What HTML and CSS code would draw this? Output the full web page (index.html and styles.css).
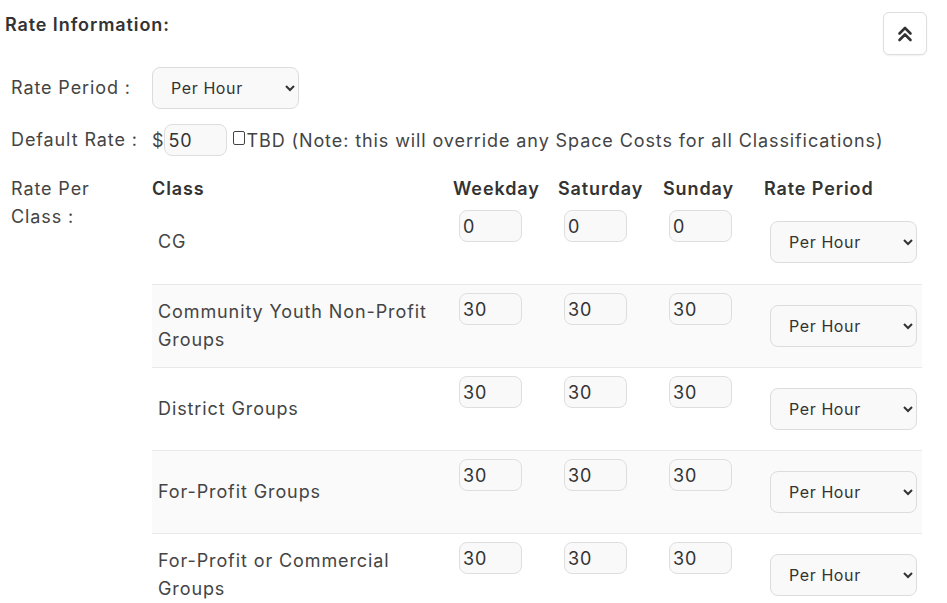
FILE: index.html
```html
<!DOCTYPE html>
<html>
<head>
<meta charset="utf-8">
<link rel="stylesheet" href="styles.css">
</head>
<body>
<div class="page">
  <div class="head">
    <h2 class="title">Rate Information:</h2>
    <button class="collapse" type="button" aria-label="Collapse">
      <svg width="16" height="18" viewBox="0 0 16 18"><path d="M2.5 8.5 L8 3 L13.5 8.5 M2.5 15 L8 9.5 L13.5 15" fill="none" stroke="#333" stroke-width="2.6" stroke-linecap="round" stroke-linejoin="round"/></svg>
    </button>
  </div>

  <div class="field period">
    <span class="lbl">Rate Period :</span>
    <select class="sel"><option>Per Hour</option><option>Per Day</option></select>
  </div>

  <div class="field default">
    <span class="lbl">Default Rate :</span>
    <span class="dollar">$</span><input class="num wide" type="text" value="50"><span class="box"></span><span class="note">TBD (Note: this will override any Space Costs for all Classifications)</span>
  </div>

  <div class="field classes">
    <span class="lbl multi">Rate Per<br>Class :</span>
    <table class="rates">
      <thead>
        <tr><th class="c-class">Class</th><th class="c-day">Weekday</th><th class="c-day">Saturday</th><th class="c-sun">Sunday</th><th class="c-per">Rate Period</th></tr>
      </thead>
      <tbody>
        <tr class="first">
          <td class="name">CG</td>
          <td class="val"><input class="num" type="text" value="0"></td>
          <td class="val"><input class="num" type="text" value="0"></td>
          <td class="val"><input class="num" type="text" value="0"></td>
          <td class="per"><select class="sel sm"><option>Per Hour</option></select></td>
        </tr>
        <tr class="alt">
          <td class="name">Community Youth Non-Profit Groups</td>
          <td class="val"><input class="num" type="text" value="30"></td>
          <td class="val"><input class="num" type="text" value="30"></td>
          <td class="val"><input class="num" type="text" value="30"></td>
          <td class="per"><select class="sel sm"><option>Per Hour</option></select></td>
        </tr>
        <tr>
          <td class="name">District Groups</td>
          <td class="val"><input class="num" type="text" value="30"></td>
          <td class="val"><input class="num" type="text" value="30"></td>
          <td class="val"><input class="num" type="text" value="30"></td>
          <td class="per"><select class="sel sm"><option>Per Hour</option></select></td>
        </tr>
        <tr class="alt">
          <td class="name">For-Profit Groups</td>
          <td class="val"><input class="num" type="text" value="30"></td>
          <td class="val"><input class="num" type="text" value="30"></td>
          <td class="val"><input class="num" type="text" value="30"></td>
          <td class="per"><select class="sel sm"><option>Per Hour</option></select></td>
        </tr>
        <tr>
          <td class="name">For-Profit or Commercial Groups</td>
          <td class="val"><input class="num" type="text" value="30"></td>
          <td class="val"><input class="num" type="text" value="30"></td>
          <td class="val"><input class="num" type="text" value="30"></td>
          <td class="per"><select class="sel sm"><option>Per Hour</option></select></td>
        </tr>
      </tbody>
    </table>
  </div>
</div>
</body>
</html>
```

FILE: styles.css
```css
html, body {
  margin: 0;
  padding: 0;
  background: #fff;
}
body {
  font-family: Inter, "Noto Sans", sans-serif;
  color: #3d3d3d;
  letter-spacing: 0.9px;
}
.page {
  padding: 12px 20px 0 5px;
}
.head {
  display: flex;
  justify-content: space-between;
  align-items: flex-start;
}
.title {
  margin: 1px 0 0 0;
  font-size: 18px;
  font-weight: 600;
  line-height: 24px;
  color: #333;
  letter-spacing: 0.9px;
}
.collapse {
  width: 44px;
  height: 43px;
  margin: 0;
  padding: 0;
  border: 1px solid #dedede;
  border-radius: 6px;
  background: #fff;
  box-shadow: 0 1px 2px rgba(0,0,0,0.06);
  display: flex;
  align-items: center;
  justify-content: center;
}
.field {
  display: flex;
  align-items: center;
  padding-left: 6px;
}
.period {
  margin-top: 12px;
}
.default {
  margin-top: 15px;
}
.classes {
  align-items: flex-start;
  margin-top: 19px;
}
.lbl {
  width: 141px;
  flex: none;
  font-size: 18px;
  line-height: 28px;
  color: #444;
}
.sel {
  height: 42px;
  width: 147px;
  font-family: Inter, "Noto Sans", sans-serif;
  font-size: 16px;
  letter-spacing: 0.6px;
  color: #333;
  background: #f9f9f9;
  border: 1px solid #dcdcdc;
  border-radius: 8px;
  padding: 0 8px 0 14px;
}
.dollar {
  font-size: 18px;
  color: #444;
}
.num {
  width: 63px;
  height: 32px;
  box-sizing: border-box;
  border: 1px solid #dedede;
  border-radius: 8px;
  background: #f9f9f9;
  font-family: Inter, "Noto Sans", sans-serif;
  font-size: 18px;
  letter-spacing: 0.9px;
  color: #333;
  padding: 0 3px;
  margin: 0;
}
.box {
  display: inline-block;
  width: 10px;
  height: 12px;
  border: 1.5px solid #444;
  border-radius: 2px;
  margin: 0 1px 0 6px;
  position: relative;
  top: -2px;
}
.note {
  font-size: 18px;
  color: #444;
}
.rates {
  border-collapse: collapse;
  width: 770px;
  table-layout: fixed;
}
.rates th {
  text-align: left;
  font-size: 18px;
  font-weight: 600;
  color: #333;
  padding: 0;
  line-height: 28px;
  height: 30px;
  vertical-align: top;
  letter-spacing: 0.9px;
}
.c-class { width: 301px; }
.c-day { width: 105px; }
.c-sun { width: 101px; }
.c-per { width: 158px; }
.rates td {
  padding: 0 6px;
  font-size: 18px;
  line-height: 28px;
  color: #444;
  height: 74px;
  border-bottom: 1px solid #e8e8e8;
}
.rates tr.alt td {
  background: #fafafa;
}
.rates td.name {
  vertical-align: middle;
  padding-right: 10px;
}
.rates td.val {
  vertical-align: top;
  padding-top: 8px;
}
.rates td.per {
  vertical-align: middle;
}
.rates tr.first td.val {
  padding-top: 5px;
}
.rates tr.first td.name,
.rates tr.first td.per {
  padding-bottom: 5px;
  height: 69px;
}
```
